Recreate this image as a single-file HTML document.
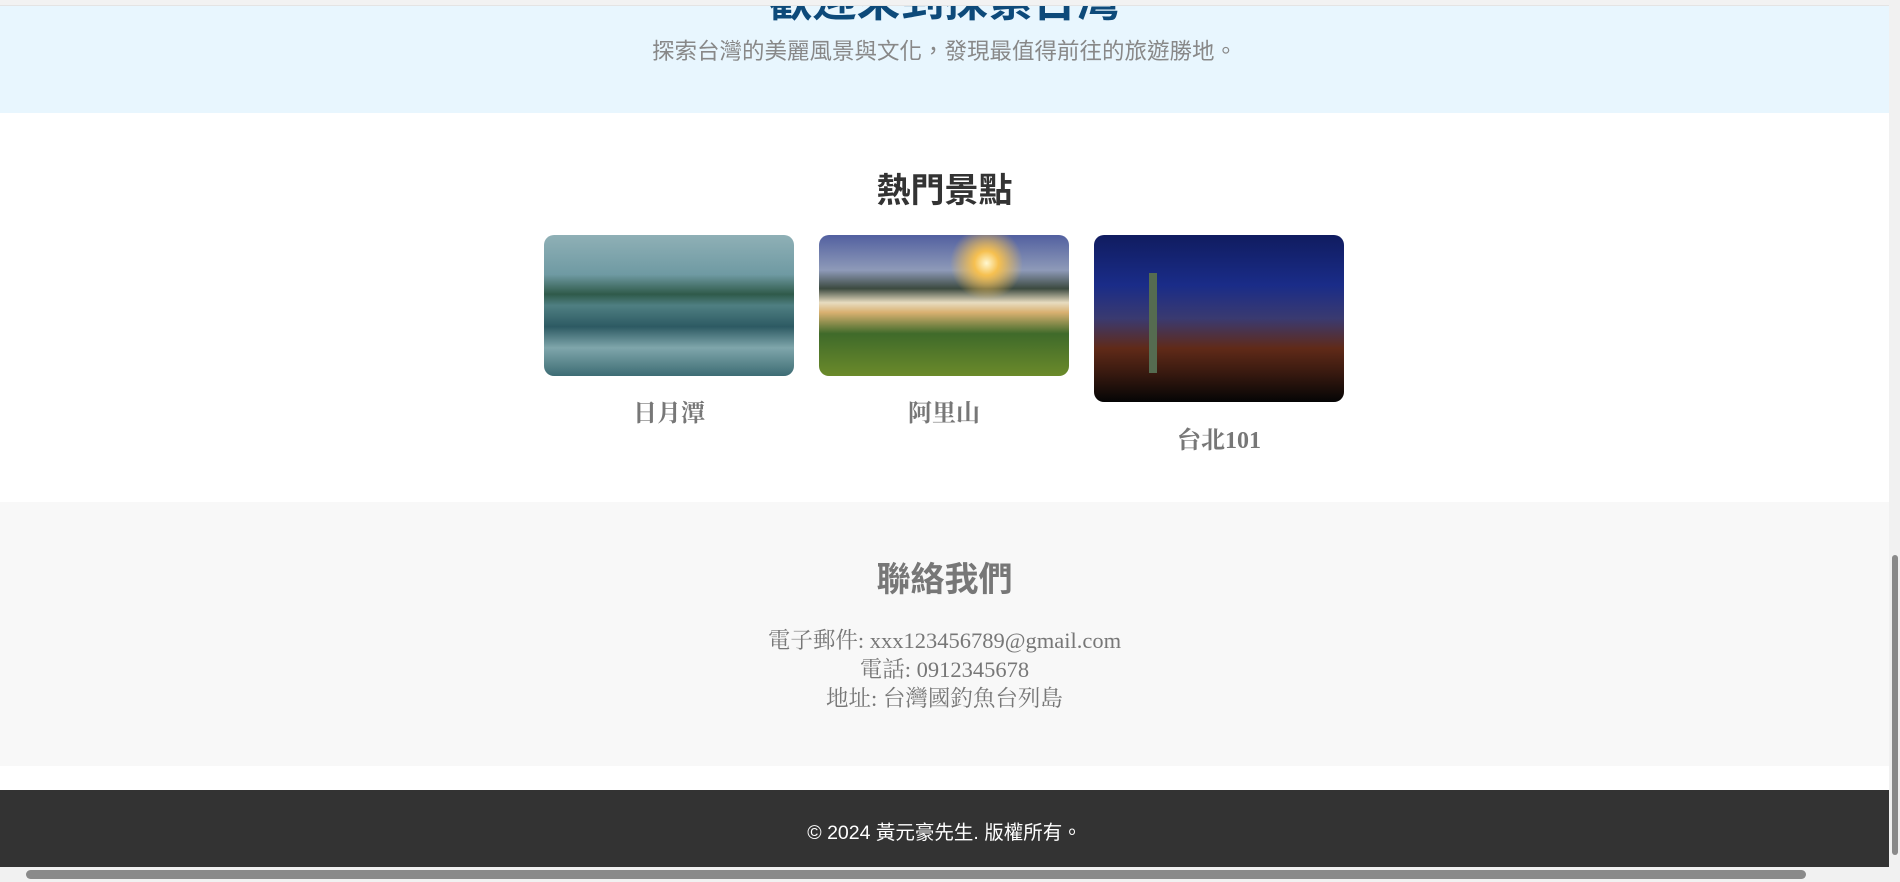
<!DOCTYPE html>
<html><head><meta charset="utf-8"><style>
*{margin:0;padding:0;box-sizing:border-box}
body{width:1900px;height:882px;overflow:hidden;position:relative;background:#fff;font-family:"Liberation Serif","Noto Serif CJK SC","Noto Sans CJK TC",serif;}
.abs{position:absolute}
.c{text-align:center;left:0;width:1889px}
.img{position:absolute;border-radius:10px;overflow:hidden}
</style></head><body>
<div class="abs" style="left:0;top:0;width:1889px;height:113px;background:#e8f6fe"></div>
<div class="abs c" style="top:-35px;font:bold 44px 'Liberation Sans','Noto Sans CJK TC',sans-serif;color:#0d4a7a">歡迎來到探索台灣</div>
<div class="abs" style="left:0;top:0;width:1900px;height:6px;background:#f2f2f2;border-bottom:1px solid #e4e4e4"></div>
<div class="abs c" style="top:34px;font-size:22.5px;color:#888;font-family:'Liberation Sans','Noto Sans CJK TC',sans-serif">探索台灣的美麗風景與文化，發現最值得前往的旅遊勝地。</div>
<div class="abs c" style="top:163px;font:bold 34px 'Liberation Sans','Noto Sans CJK TC',sans-serif;color:#333">熱門景點</div>
<div class="img" style="left:544px;top:235px;width:250px;height:141px;background:linear-gradient(180deg,#8fb0b6 0%,#6f9aa3 28%,#2f5a4a 42%,#4f7f82 50%,#2d5a63 65%,#7fa6ab 80%,#3d6c74 100%)"></div>
<div class="img" style="left:819px;top:235px;width:250px;height:141px;background:radial-gradient(circle at 67% 20%,#fff8d0 0,#f6c050 6%,transparent 18%),linear-gradient(180deg,#5260a0 0%,#8e9ab8 25%,#3c4a40 38%,#e8dcc0 48%,#d8b070 55%,#3f6a2a 70%,#6b8a2a 100%)"></div>
<div class="img" style="left:1094px;top:235px;width:250px;height:167px;background:linear-gradient(180deg,#101c60 0%,#1a2c88 30%,#3a3a70 50%,#602a18 68%,#3a1a10 82%,#050505 100%)"><div style="position:absolute;left:55px;top:38px;width:8px;height:100px;background:#556b50"></div></div>
<div class="abs" style="left:544px;top:393px;width:250px;text-align:center;font-weight:bold;font-size:24px;color:#777">日月潭</div>
<div class="abs" style="left:819px;top:393px;width:250px;text-align:center;font-weight:bold;font-size:24px;color:#777">阿里山</div>
<div class="abs" style="left:1094px;top:420px;width:250px;text-align:center;font-weight:bold;font-size:24px;color:#777">台北101</div>
<div class="abs" style="left:0;top:502px;width:1889px;height:264px;background:#f8f8f8"></div>
<div class="abs c" style="top:552px;font:bold 34px 'Liberation Sans','Noto Sans CJK TC',sans-serif;color:#777">聯絡我們</div>
<div class="abs c" style="top:626px;font-size:22.5px;line-height:29px;color:#777">電子郵件: xxx123456789@gmail.com<br>電話: 0912345678<br>地址: 台灣國釣魚台列島</div>
<div class="abs" style="left:0;top:790px;width:1889px;height:77px;background:#333"></div>
<div class="abs c" style="top:816px;font:19.5px 'Liberation Sans','Noto Sans CJK TC',sans-serif;color:#fff">© 2024 黃元豪先生. 版權所有。</div>
<div class="abs" style="left:1889px;top:0;width:11px;height:882px;background:#f1f1f1"></div>
<div class="abs" style="left:1892px;top:555px;width:6px;height:300px;background:#8a8a8a;border-radius:3px"></div>
<div class="abs" style="left:0;top:867px;width:1900px;height:15px;background:#f1f1f1"></div>
<div class="abs" style="left:26px;top:870px;width:1780px;height:9px;background:#8a8a8a;border-radius:5px"></div>
</body></html>
